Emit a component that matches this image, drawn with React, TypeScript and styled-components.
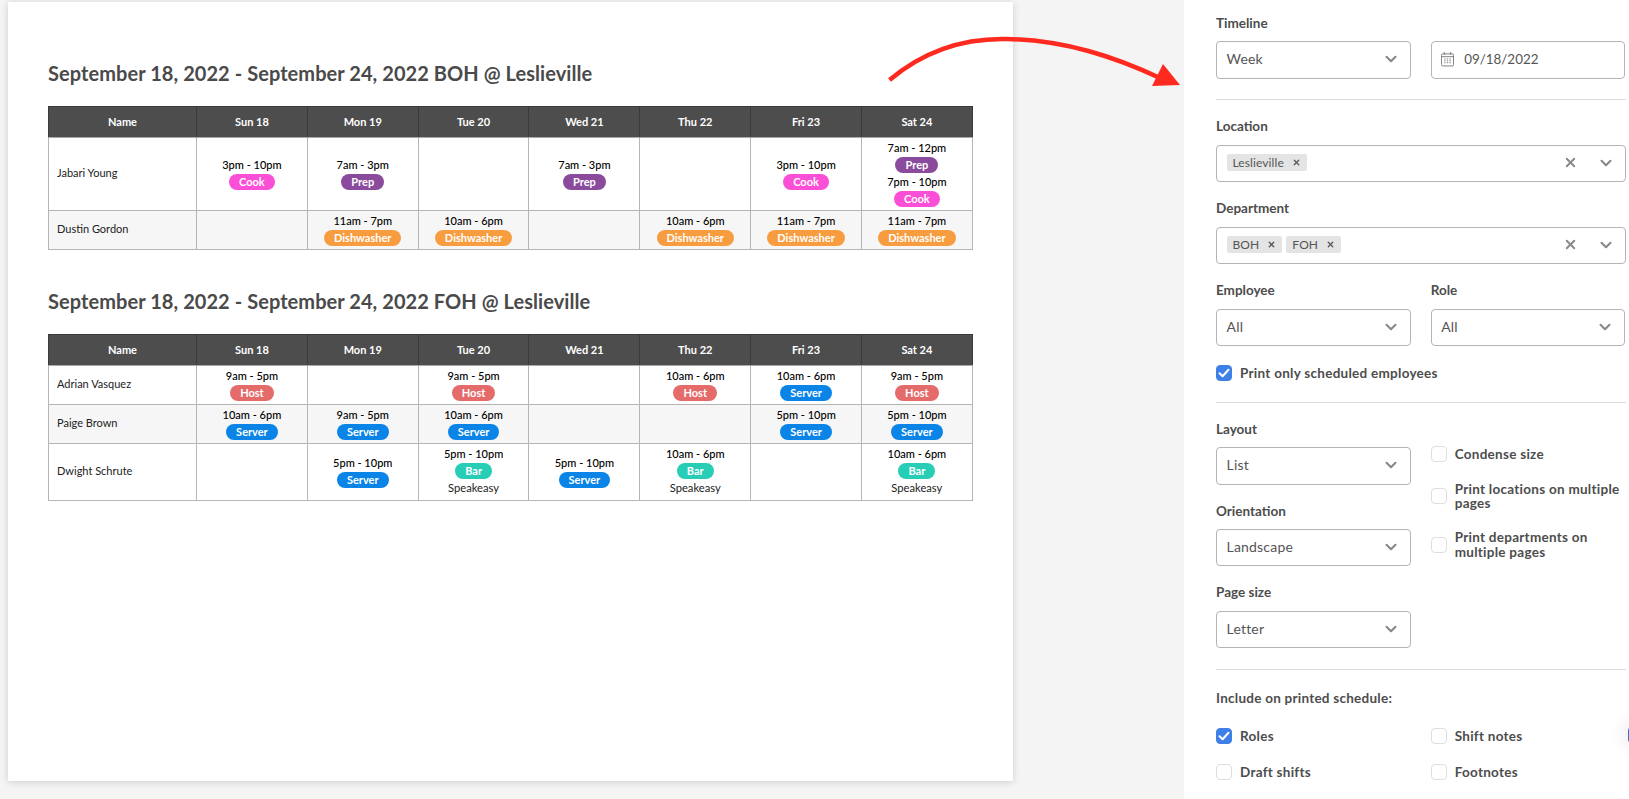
import React from "react";
import styled, { createGlobalStyle } from "styled-components";
import { ChevronDown, X } from "lucide-react";

const Global = createGlobalStyle`
  html, body { margin: 0; padding: 0; background: #f4f4f4; }
  body { font-family: "Lato", "Liberation Sans", sans-serif; }
  * { box-sizing: border-box; }
`;

const Screen = styled.div`
  position: relative;
  display: flex;
  width: 1629px;
  height: 799px;
  overflow: hidden;
  background: #f4f4f4;
`;
const PreviewArea = styled.main`
  width: 1184px;
  flex: none;
  padding: 2px 0 0 8px;
`;
const Sheet = styled.div`
  width: 1005px;
  height: 779px;
  padding: 59px 0 0 40px;
  background: #fff;
  box-shadow: 0 1px 7px rgba(0, 0, 0, 0.16);
`;
const Section = styled.section`
  margin-bottom: 39px;
`;
const Heading = styled.h2`
  margin: 0 0 21px;
  height: 24px;
  font-size: 20px;
  line-height: 24px;
  font-weight: 700;
  letter-spacing: 0.06px;
  color: #4a4a4a;
  white-space: nowrap;
`;
const Table = styled.table`
  width: 923.8px;
  table-layout: fixed;
  border-collapse: collapse;
`;
const Col = styled.col<{ $w: number }>`
  width: ${(p) => p.$w}px;
`;
const Th = styled.th`
  height: 31px;
  padding: 0 0 2px;
  background: #4d4d4d;
  border: 1px solid #3a3a3a;
  border-bottom-color: #a8a8a8;
  color: #fff;
  font-size: 11px;
  font-weight: 700;
  text-align: center;
`;
const Tr = styled.tr<{ $h: number; $alt: boolean }>`
  height: ${(p) => p.$h}px;
  background: ${(p) => (p.$alt ? "#f6f6f6" : "#fff")};
`;
const NameCell = styled.td`
  padding: 0 0 3px 8px;
  border: 1px solid #b5b5b5;
  font-size: 11px;
  color: #222;
`;
const Cell = styled.td`
  padding: 0;
  border: 1px solid #b5b5b5;
  text-align: center;
  vertical-align: middle;
`;
const ShiftBlock = styled.div`
  display: flex;
  flex-direction: column;
  align-items: center;
  padding-bottom: 1px;
`;
const Time = styled.div`
  height: 17px;
  line-height: 15px;
  font-size: 11px;
  font-weight: 500;
  color: #000;
  white-space: nowrap;
`;
const Tag = styled.span<{ $c: string }>`
  display: block;
  height: 16px;
  margin-bottom: 1px;
  padding: 0 10px;
  border-radius: 8px;
  background: ${(p) => p.$c};
  color: #fff;
  font-size: 11px;
  font-weight: 700;
  line-height: 15px;
  white-space: nowrap;
`;
const Venue = styled.div`
  height: 18px;
  line-height: 16px;
  font-size: 11.2px;
  color: #222;
`;

const Sidebar = styled.aside`
  flex: 1;
  padding: 14.7px 3.3px 0 32px;
  background: #fff;
`;
const Field = styled.div`
  margin-bottom: 18px;
`;
const Label = styled.div`
  height: 18px;
  margin-bottom: 8.6px;
  line-height: 16px;
  font-size: 13.5px;
  font-weight: 700;
  color: #4d4d4d;
  white-space: nowrap;
`;
const Grid = styled.div`
  display: grid;
  grid-template-columns: 194.7px 194.7px;
  column-gap: 20px;
`;
const Box = styled.div`
  display: flex;
  align-items: center;
  height: 37.4px;
  padding: 0 10px 2px 9.5px;
  background: #fff;
  border: 1px solid #b4b4b4;
  border-radius: 4px;
  font-size: 14px;
  letter-spacing: 0.2px;
  color: #555;
`;
const BoxText = styled.span`
  flex: 1;
  white-space: nowrap;
`;
const DateText = styled.span`
  margin-left: 10px;
  font-size: 13.4px;
  letter-spacing: 0;
`;
const Chips = styled.div`
  flex: 1;
  display: flex;
  gap: 4px;
`;
const Chip = styled.span`
  display: flex;
  align-items: center;
  height: 17px;
  padding: 0 6px;
  gap: 8px;
  border-radius: 2px;
  background: #e4e4e4;
  font-size: 12px;
  letter-spacing: 0.1px;
  color: #555;
`;
const ClearIcon = styled(X)`
  margin-right: 18.5px;
  color: #888;
`;
const Chevron = styled(ChevronDown)`
  flex: none;
  color: #888;
`;
const Divider = styled.hr<{ $after: number }>`
  height: 1px;
  margin: 2.6px 0 ${(p) => p.$after}px;
  border: 0;
  background: #dcdcdc;
`;
const Option = styled.label<{ $mb?: number; $mt?: number }>`
  display: flex;
  align-items: center;
  gap: 8px;
  margin-top: ${(p) => p.$mt ?? 0}px;
  margin-bottom: ${(p) => p.$mb ?? 0}px;
  font-size: 13.5px;
  line-height: 14.2px;
  font-weight: 700;
  letter-spacing: 0.27px;
  color: #4d4d4d;
`;
const Check = styled.span<{ $on?: boolean }>`
  flex: none;
  display: flex;
  align-items: center;
  justify-content: center;
  width: 16px;
  height: 16px;
  border-radius: 4px;
  background: ${(p) => (p.$on ? "#3f7fe8" : "#fff")};
  border: 1px solid ${(p) => (p.$on ? "#3f7fe8" : "#dedede")};
`;
const OptionColumn = styled.div`
  padding-top: 25.8px;
  display: flex;
  flex-direction: column;
  gap: 19.8px;
`;
const IncludeLabel = styled.div`
  height: 18px;
  margin: 19px 0 21px;
  line-height: 18px;
  font-size: 13.5px;
  font-weight: 700;
  letter-spacing: 0.25px;
  color: #4d4d4d;
`;
const IncludeGrid = styled(Grid)`
  row-gap: 20px;
`;
const TimelineDivider = styled(Divider)`
  margin-top: 20.6px;
`;
const Arrow = styled.svg`
  position: absolute;
  left: 0;
  top: 0;
  pointer-events: none;
`;
const ChatEdge = styled.div`
  position: absolute;
  left: 1627.5px;
  top: 727px;
  width: 16px;
  height: 16px;
  border-radius: 4px;
  background: #3d6fd8;
  box-shadow: 0 0 16px 6px rgba(0, 0, 0, 0.06);
`;

type Shift = { t: string; r: string; v?: string };
type Row = { name: string; h: number; days: (Shift[] | null)[] };

const COLORS: Record<string, string> = {
  Cook: "#fa4fd6",
  Prep: "#8a4b9d",
  Dishwasher: "#f79d40",
  Host: "#e56b6b",
  Server: "#0a84e6",
  Bar: "#27ceb5",
};
const DAYS = ["Sun 18", "Mon 19", "Tue 20", "Wed 21", "Thu 22", "Fri 23", "Sat 24"];
const s = (t: string, r: string, v?: string): Shift[] => [{ t, r, v }];

const BOH: Row[] = [
  {
    name: "Jabari Young",
    h: 73,
    days: [
      s("3pm - 10pm", "Cook"),
      s("7am - 3pm", "Prep"),
      null,
      s("7am - 3pm", "Prep"),
      null,
      s("3pm - 10pm", "Cook"),
      [
        { t: "7am - 12pm", r: "Prep" },
        { t: "7pm - 10pm", r: "Cook" },
      ],
    ],
  },
  {
    name: "Dustin Gordon",
    h: 39,
    days: [
      null,
      s("11am - 7pm", "Dishwasher"),
      s("10am - 6pm", "Dishwasher"),
      null,
      s("10am - 6pm", "Dishwasher"),
      s("11am - 7pm", "Dishwasher"),
      s("11am - 7pm", "Dishwasher"),
    ],
  },
];
const FOH: Row[] = [
  {
    name: "Adrian Vasquez",
    h: 39,
    days: [
      s("9am - 5pm", "Host"),
      null,
      s("9am - 5pm", "Host"),
      null,
      s("10am - 6pm", "Host"),
      s("10am - 6pm", "Server"),
      s("9am - 5pm", "Host"),
    ],
  },
  {
    name: "Paige Brown",
    h: 39,
    days: [
      s("10am - 6pm", "Server"),
      s("9am - 5pm", "Server"),
      s("10am - 6pm", "Server"),
      null,
      null,
      s("5pm - 10pm", "Server"),
      s("5pm - 10pm", "Server"),
    ],
  },
  {
    name: "Dwight Schrute",
    h: 57,
    days: [
      null,
      s("5pm - 10pm", "Server"),
      s("5pm - 10pm", "Bar", "Speakeasy"),
      s("5pm - 10pm", "Server"),
      s("10am - 6pm", "Bar", "Speakeasy"),
      null,
      s("10am - 6pm", "Bar", "Speakeasy"),
    ],
  },
];

const Schedule = ({ title, rows }: { title: string; rows: Row[] }) => (
  <Section>
    <Heading>{title}</Heading>
    <Table>
      <colgroup>
        <Col $w={148} />
        {DAYS.map((d) => (
          <Col key={d} $w={110.83} />
        ))}
      </colgroup>
      <thead>
        <tr>
          <Th>Name</Th>
          {DAYS.map((d) => (
            <Th key={d}>{d}</Th>
          ))}
        </tr>
      </thead>
      <tbody>
        {rows.map((row, i) => (
          <Tr key={row.name} $h={row.h} $alt={i % 2 === 1}>
            <NameCell>{row.name}</NameCell>
            {row.days.map((shifts, j) => (
              <Cell key={j}>
                {shifts && (
                  <ShiftBlock>
                    {shifts.map((x) => (
                      <React.Fragment key={x.t}>
                        <Time>{x.t}</Time>
                        <Tag $c={COLORS[x.r]}>{x.r}</Tag>
                        {x.v && <Venue>{x.v}</Venue>}
                      </React.Fragment>
                    ))}
                  </ShiftBlock>
                )}
              </Cell>
            ))}
          </Tr>
        ))}
      </tbody>
    </Table>
  </Section>
);

const Chev = () => <Chevron size={18} strokeWidth={2.8} />;

const Select = ({ label, value }: { label: string; value: string }) => (
  <Field>
    <Label>{label}</Label>
    <Box>
      <BoxText>{value}</BoxText>
      <Chev />
    </Box>
  </Field>
);

const Multi = ({ label, values }: { label: string; values: string[] }) => (
  <Field>
    <Label>{label}</Label>
    <Box>
      <Chips>
        {values.map((v) => (
          <Chip key={v}>
            {v}
            <X size={9} strokeWidth={3.4} />
          </Chip>
        ))}
      </Chips>
      <ClearIcon size={15} strokeWidth={3} />
      <Chev />
    </Box>
  </Field>
);

const Tick = () => (
  <svg width="12" height="10" viewBox="0 0 12 10">
    <path d="M1.5 5.2 4.6 8.2 10.5 1.8" fill="none" stroke="#fff" strokeWidth="2" strokeLinecap="round" strokeLinejoin="round" />
  </svg>
);

const Opt = ({ on, children, mb, mt }: { on?: boolean; children: React.ReactNode; mb?: number; mt?: number }) => (
  <Option $mb={mb} $mt={mt}>
    <Check $on={on}>{on && <Tick />}</Check>
    <span>{children}</span>
  </Option>
);

const CalendarIcon = () => (
  <svg width="13" height="16" viewBox="0 0 14 16" fill="none" stroke="#777" strokeWidth="1">
    <rect x="0.5" y="2.5" width="13" height="13" rx="1.5" />
    <path d="M0.5 5.5h13M3.5 0.5v3M10.5 0.5v3" />
    <path d="M3.5 8h1.4M6.3 8h1.4M9.1 8h1.4M3.5 10h1.4M6.3 10h1.4M9.1 10h1.4M3.5 12h1.4M6.3 12h1.4M9.1 12h1.4" />
  </svg>
);

export default function App() {
  return (
    <Screen>
      <Global />
      <PreviewArea>
        <Sheet>
          <Schedule title="September 18, 2022 - September 24, 2022 BOH @ Leslieville" rows={BOH} />
          <Schedule title="September 18, 2022 - September 24, 2022 FOH @ Leslieville" rows={FOH} />
        </Sheet>
      </PreviewArea>
      <Sidebar>
        <Label>Timeline</Label>
        <Grid>
          <Box>
            <BoxText>Week</BoxText>
            <Chev />
          </Box>
          <Box>
            <CalendarIcon />
            <DateText>09/18/2022</DateText>
          </Box>
        </Grid>
        <TimelineDivider $after={18} />
        <Multi label="Location" values={["Leslieville"]} />
        <Multi label="Department" values={["BOH", "FOH"]} />
        <Grid>
          <Select label="Employee" value="All" />
          <Select label="Role" value="All" />
        </Grid>
        <Opt on mt={1} mb={20.3}>
          Print only scheduled employees
        </Opt>
        <Divider $after={18} />
        <Grid>
          <div>
            <Select label="Layout" value="List" />
            <Select label="Orientation" value="Landscape" />
            <Select label="Page size" value="Letter" />
          </div>
          <OptionColumn>
            <Opt>Condense size</Opt>
            <Opt>Print locations on multiple pages</Opt>
            <Opt>Print departments on multiple pages</Opt>
          </OptionColumn>
        </Grid>
        <Divider $after={0} />
        <IncludeLabel>Include on printed schedule:</IncludeLabel>
        <IncludeGrid>
          <Opt on>Roles</Opt>
          <Opt>Shift notes</Opt>
          <Opt>Draft shifts</Opt>
          <Opt>Footnotes</Opt>
        </IncludeGrid>
      </Sidebar>
      <ChatEdge />
      <Arrow width="1629" height="799" viewBox="0 0 1629 799">
        <path d="M889.5 80C925 50 965 38 1007 39C1065 40 1115 57 1160 78" fill="none" stroke="#ff2a1f" strokeWidth="4.5" />
        <path d="M1163 64 1180 85 1152 86Z" fill="#ff2a1f" />
      </Arrow>
    </Screen>
  );
}
